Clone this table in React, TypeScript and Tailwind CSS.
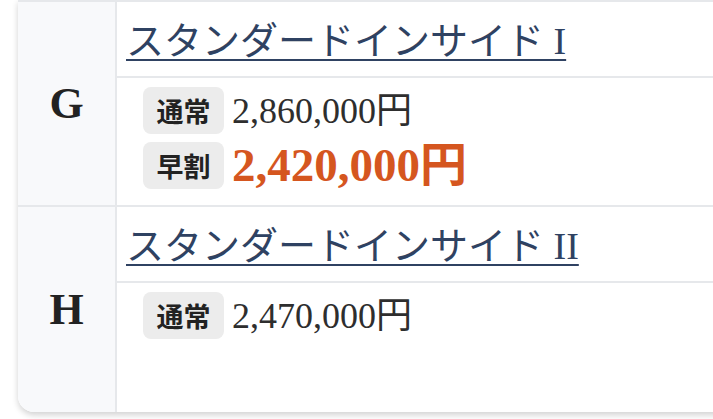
import React from "react";

const serif = { fontFamily: '"Liberation Serif", "Noto Sans CJK JP", serif' };
const sans = { fontFamily: '"Noto Sans CJK JP", "Noto Sans", sans-serif' };

function Badge({ label }: { label: string }) {
  return (
    <span
      className="flex h-[47px] w-[81px] shrink-0 items-center justify-center rounded-lg bg-[#ececec] text-[27px] font-bold leading-none text-[#222]"
      style={sans}
    >
      {label}
    </span>
  );
}

function Row({
  letter,
  title,
  prices,
  last,
}: {
  letter: string;
  title: string;
  prices: { label: string; value: string; early?: boolean }[];
  last?: boolean;
}) {
  return (
    <div className={`flex h-[205px] ${last ? "" : "border-b-2 border-[#e6e8eb]"}`}>
      <div
        className="flex w-[99px] shrink-0 items-center justify-center border-r-2 border-[#e6e8eb] bg-[#f8f9fb] text-[44px] font-bold text-[#222]"
        style={serif}
      >
        {letter}
      </div>
      <div className="flex flex-1 flex-col">
        <div className="flex h-[76px] items-center border-b-2 border-[#e6e8eb] pl-[9px] pt-[4px]">
          <span
            className="text-[38px] leading-none text-[#2f4262] underline decoration-2 underline-offset-[5px]"
            style={serif}
          >
            {title}
          </span>
        </div>
        <div className="flex flex-col gap-2 pl-[26px] pt-[9px]">
          {prices.map((p) => (
            <div key={p.label} className="flex items-center gap-2">
              <Badge label={p.label} />
              <span
                className={
                  p.early
                    ? "text-[47px] font-bold leading-none text-[#d5561f]"
                    : "text-[36px] leading-none text-[#2e2e2e]"
                }
                style={serif}
              >
                {p.value}
              </span>
            </div>
          ))}
        </div>
      </div>
    </div>
  );
}

export default function App() {
  return (
    <div className="h-[419px] w-[713px] overflow-hidden bg-white pl-[18px]">
      <div className="w-[720px] overflow-hidden rounded-bl-[16px] border-t-2 border-[#e6e8eb] bg-white shadow-[0_3px_6px_rgba(0,0,0,0.18)]">
        <Row
          letter="G"
          title="スタンダードインサイド I"
          prices={[
            { label: "通常", value: "2,860,000円" },
            { label: "早割", value: "2,420,000円", early: true },
          ]}
        />
        <Row
          letter="H"
          title="スタンダードインサイド II"
          prices={[{ label: "通常", value: "2,470,000円" }]}
          last
        />
      </div>
    </div>
  );
}
